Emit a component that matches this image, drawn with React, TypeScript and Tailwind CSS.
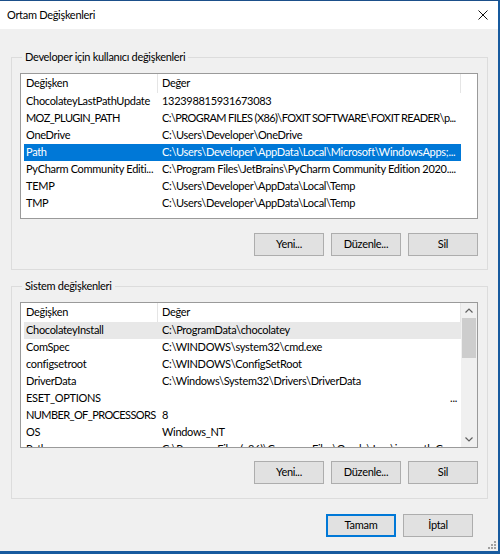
const font = "font-['Lato',sans-serif] tracking-[-0.3px]";

// tight: rows with long upper-case text get narrower spacing
type Row = { name: string; value: string; right?: boolean; tight?: boolean };

const userVars: Row[] = [
  { name: "ChocolateyLastPathUpdate", value: "132398815931673083" },
  { name: "MOZ_PLUGIN_PATH", value: "C:\\PROGRAM FILES (X86)\\FOXIT SOFTWARE\\FOXIT READER\\p...", tight: true },
  { name: "OneDrive", value: "C:\\Users\\Developer\\OneDrive" },
  { name: "Path", value: "C:\\Users\\Developer\\AppData\\Local\\Microsoft\\WindowsApps;..." },
  { name: "PyCharm Community Editi...", value: "C:\\Program Files\\JetBrains\\PyCharm Community Edition 2020...." },
  { name: "TEMP", value: "C:\\Users\\Developer\\AppData\\Local\\Temp" },
  { name: "TMP", value: "C:\\Users\\Developer\\AppData\\Local\\Temp" },
];

const systemVars: Row[] = [
  { name: "ChocolateyInstall", value: "C:\\ProgramData\\chocolatey" },
  { name: "ComSpec", value: "C:\\WINDOWS\\system32\\cmd.exe" },
  { name: "configsetroot", value: "C:\\WINDOWS\\ConfigSetRoot" },
  { name: "DriverData", value: "C:\\Windows\\System32\\Drivers\\DriverData" },
  { name: "ESET_OPTIONS", value: "...", right: true },
  { name: "NUMBER_OF_PROCESSORS", value: "8", tight: true },
  { name: "OS", value: "Windows_NT" },
  { name: "Path", value: "C:\\Program Files (x86)\\Common Files\\Oracle\\Java\\javapath;C..." },
];

function Button({ label, primary }: { label: string; primary?: boolean }) {
  return (
    <button
      className={
        "h-[23px] w-[70px] bg-[#e1e1e1] text-[11px] text-black border " +
        (primary ? "border-[#0078d7] shadow-[inset_0_0_0_1px_#0078d7]" : "border-[#adadad]")
      }
    >
      {label}
    </button>
  );
}

function Chevron({ down }: { down?: boolean }) {
  return (
    <svg width="8" height="5" viewBox="0 0 8 5">
      <path
        d={down ? "M0.5 0.5 L4 4 L7.5 0.5" : "M0.5 4.5 L4 1 L7.5 4.5"}
        fill="none"
        stroke="#606060"
        strokeWidth="1.2"
      />
    </svg>
  );
}

function VarList({
  rows,
  selected,
  hover,
  scroll,
}: {
  rows: Row[];
  selected?: number;
  hover?: number;
  scroll?: boolean;
}) {
  return (
    <div className="h-[146px] border border-[#9a9a9a] bg-white flex overflow-hidden">
      <div className="flex-1 min-w-0 pl-[3px] overflow-hidden">
        <div className="flex h-[19px] items-center text-[11px] text-black">
          <div className="w-[134px] shrink-0 pl-[2px] border-r border-[#e5e5e5] h-full flex items-center">Değişken</div>
          <div className="flex-1 min-w-0 pl-[4px] border-r border-[#e5e5e5] h-full flex items-center">Değer</div>
        </div>
        {rows.map((r, i) => (
          <div
            key={r.name + i}
            className={
              "flex h-[17px] items-center text-[11px] whitespace-nowrap " +
              (r.tight ? "tracking-[-0.6px] " : "") +
              (i === selected ? "bg-[#0078d7] text-white" : i === hover ? "bg-[#e8e8e8] text-black" : "text-black")
            }
          >
            <div className="w-[134px] shrink-0 pl-[2px]">{r.name}</div>
            <div className={"flex-1 min-w-0 pl-[4px] overflow-hidden flex " + (r.right ? "justify-end pr-[4px]" : "")}>
              {r.value}
            </div>
          </div>
        ))}
      </div>
      {scroll ? (
        <div className="w-[16px] shrink-0 bg-[#f0f0f0] flex flex-col">
          <div className="h-[15px] flex items-center justify-center">
            <Chevron />
          </div>
          <div className="h-[40px] mx-[1px] bg-[#cdcdcd]" />
          <div className="flex-1" />
          <div className="h-[16px] flex items-center justify-center">
            <Chevron down />
          </div>
        </div>
      ) : (
        <div className="w-[16px] shrink-0" />
      )}
    </div>
  );
}

function Group({ title, children, className }: { title: string; children: React.ReactNode; className?: string }) {
  return (
    <fieldset className={"min-w-0 border border-[#dcdcdc] " + (className ?? "")}>
      <legend className="ml-[2px] px-[3px] text-[11px] leading-[16px] text-black">{title}</legend>
      {children}
    </fieldset>
  );
}

export default function App() {
  return (
    <div
      className={
        font +
        " w-[500px] h-[554px] overflow-hidden flex flex-col bg-[#f0f0f0] border-t border-t-[#1b4f8a] border-r-2 border-r-[#175a9e] border-b-[3px] border-b-[#175a9e]"
      }
    >
      <div className="h-[28px] shrink-0 bg-white flex items-center justify-between pl-[7px] pr-[10px]">
        <span className="text-[11px] text-black">Ortam Değişkenleri</span>
        <svg width="10" height="10" viewBox="0 0 10 10">
          <path d="M0.5 0.5 L9.5 9.5 M9.5 0.5 L0.5 9.5" stroke="#111" strokeWidth="1" />
        </svg>
      </div>

      <div className="relative flex-1 min-w-0 pl-[11px] pr-[10px] pt-[20px]">
        <Group title="Developer için kullanıcı değişkenleri" className="pl-[8px] pr-[9px] pt-[8px] pb-[13px]">
          <VarList rows={userVars} selected={3} />
          <div className="flex justify-end gap-[7px] mt-[14px]">
            <Button label="Yeni..." />
            <Button label="Düzenle..." />
            <Button label="Sil" />
          </div>
        </Group>

        <Group title="Sistem değişkenleri" className="mt-[8px] pl-[8px] pr-[9px] pt-[8px] pb-[14px]">
          <VarList rows={systemVars} hover={0} scroll />
          <div className="flex justify-end gap-[7px] mt-[13px]">
            <Button label="Yeni..." />
            <Button label="Düzenle..." />
            <Button label="Sil" />
          </div>
        </Group>

        <div className="flex justify-end gap-[7px] mt-[15px] pr-[15px]">
          <Button label="Tamam" primary />
          <Button label="İptal" />
        </div>

        <svg className="absolute right-[1px] bottom-[1px]" width="10" height="10" viewBox="0 0 10 10">
          <g fill="#a0a0a0">
            <rect x="7" y="1" width="2" height="2" />
            <rect x="4" y="4" width="2" height="2" />
            <rect x="7" y="4" width="2" height="2" />
            <rect x="1" y="7" width="2" height="2" />
            <rect x="4" y="7" width="2" height="2" />
            <rect x="7" y="7" width="2" height="2" />
          </g>
        </svg>
      </div>
    </div>
  );
}
